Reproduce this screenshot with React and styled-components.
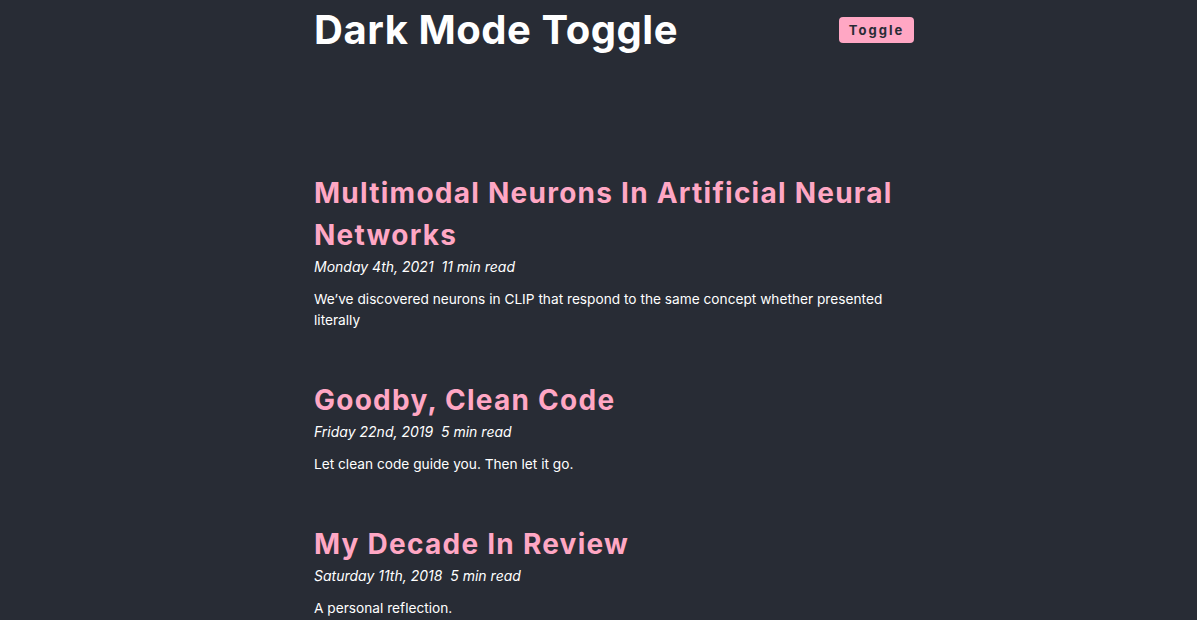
import React from "react";
import styled, { createGlobalStyle } from "styled-components";

const GlobalStyle = createGlobalStyle`
  html, body {
    margin: 0;
    padding: 0;
    background: #282c35;
  }
  body {
    font-family: Inter, "Noto Sans", sans-serif;
    color: #ffffff;
  }
`;

const Page = styled.div`
  width: 600px;
  margin: 0 auto;
  padding-left: 31px;
  min-height: 620px;
`;

const Header = styled.header`
  display: flex;
  justify-content: space-between;
  align-items: flex-start;
  height: 160px;
`;

const SiteTitle = styled.h1`
  margin: 7px 0 0;
  font-size: 40px;
  line-height: 46px;
  font-weight: 700;
  letter-spacing: 0.55px;
  color: #ffffff;
`;

const ToggleButton = styled.button`
  margin-top: 17px;
  width: 75px;
  height: 26px;
  border: none;
  border-radius: 4px;
  background: #ffa7c4;
  color: #282c35;
  font-family: Inter, "Noto Sans", sans-serif;
  font-size: 13px;
  font-weight: 700;
  letter-spacing: 2px;
  cursor: pointer;
`;

const Post = styled.article`
  margin-bottom: 48px;
`;

const PostTitle = styled.h2`
  margin: 12px 0 0;
  font-size: 28px;
  line-height: 42px;
  font-weight: 700;
  letter-spacing: 1.25px;
  color: #ffa7c4;
`;

const Meta = styled.small`
  display: block;
  padding-top: 1px;
  font-size: 14px;
  line-height: 20px;
  font-style: italic;
  color: #ffffff;
`;

const Excerpt = styled.p`
  margin: 12px 0 0;
  font-size: 13.7px;
  line-height: 21px;
  color: #ffffff;
`;

const posts = [
  {
    title: "Multimodal Neurons In Artificial Neural Networks",
    date: "Monday 4th, 2021",
    read: "11 min read",
    text: "We\u2019ve discovered neurons in CLIP that respond to the same concept whether presented literally",
  },
  {
    title: "Goodby, Clean Code",
    date: "Friday 22nd, 2019",
    read: "5 min read",
    text: "Let clean code guide you. Then let it go.",
  },
  {
    title: "My Decade In Review",
    date: "Saturday 11th, 2018",
    read: "5 min read",
    text: "A personal reflection.",
  },
];

const App = () => {
  return (
    <>
      <GlobalStyle />
      <Page>
        <Header>
          <SiteTitle>Dark Mode Toggle</SiteTitle>
          <ToggleButton>Toggle</ToggleButton>
        </Header>
        {posts.map((p) => (
          <Post key={p.title}>
            <PostTitle>{p.title}</PostTitle>
            <Meta>
              {p.date}&nbsp; {p.read}
            </Meta>
            <Excerpt>{p.text}</Excerpt>
          </Post>
        ))}
      </Page>
    </>
  );
};

export default App;
